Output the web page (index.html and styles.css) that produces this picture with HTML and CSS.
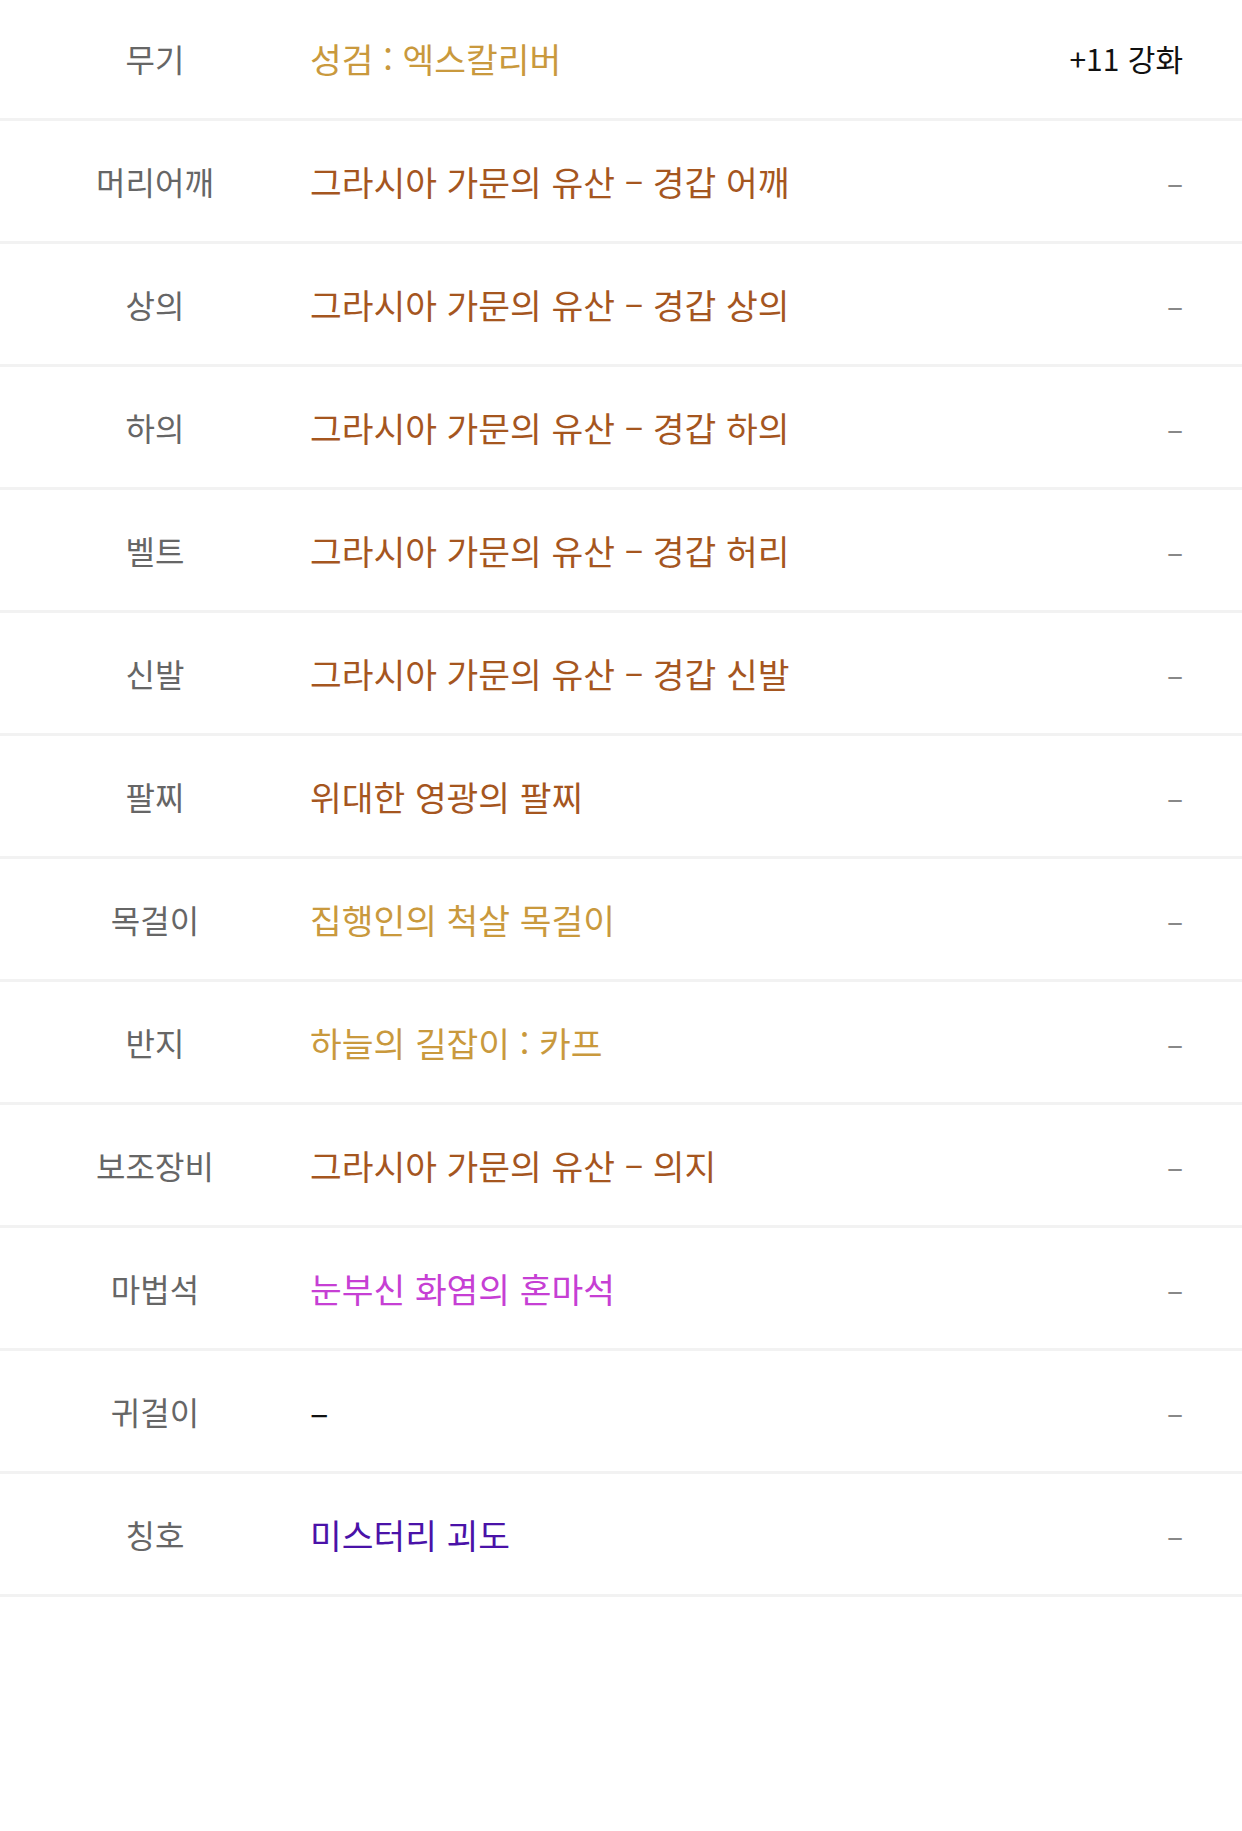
FILE: index.html
```html
<!DOCTYPE html>
<html lang="ko">
<head>
    <meta charset="UTF-8">
    <meta name="viewport" content="width=device-width, initial-scale=1.0">
    <title>장비</title>
    <link rel="stylesheet" href="styles.css">
</head>
<body>
    <div class="equip-list">
        <div class="equip-row">
            <div class="slot">무기</div>
            <div class="item gold">성검 : 엑스칼리버</div>
            <div class="extra strong">+11 강화</div>
        </div>
        <div class="equip-row">
            <div class="slot">머리어깨</div>
            <div class="item brown">그라시아 가문의 유산 – 경갑 어깨</div>
            <div class="extra">–</div>
        </div>
        <div class="equip-row">
            <div class="slot">상의</div>
            <div class="item brown">그라시아 가문의 유산 – 경갑 상의</div>
            <div class="extra">–</div>
        </div>
        <div class="equip-row">
            <div class="slot">하의</div>
            <div class="item brown">그라시아 가문의 유산 – 경갑 하의</div>
            <div class="extra">–</div>
        </div>
        <div class="equip-row">
            <div class="slot">벨트</div>
            <div class="item brown">그라시아 가문의 유산 – 경갑 허리</div>
            <div class="extra">–</div>
        </div>
        <div class="equip-row">
            <div class="slot">신발</div>
            <div class="item brown">그라시아 가문의 유산 – 경갑 신발</div>
            <div class="extra">–</div>
        </div>
        <div class="equip-row">
            <div class="slot">팔찌</div>
            <div class="item brown">위대한 영광의 팔찌</div>
            <div class="extra">–</div>
        </div>
        <div class="equip-row">
            <div class="slot">목걸이</div>
            <div class="item gold">집행인의 척살 목걸이</div>
            <div class="extra">–</div>
        </div>
        <div class="equip-row">
            <div class="slot">반지</div>
            <div class="item gold">하늘의 길잡이 : 카프</div>
            <div class="extra">–</div>
        </div>
        <div class="equip-row">
            <div class="slot">보조장비</div>
            <div class="item brown">그라시아 가문의 유산 – 의지</div>
            <div class="extra">–</div>
        </div>
        <div class="equip-row">
            <div class="slot">마법석</div>
            <div class="item magenta">눈부신 화염의 혼마석</div>
            <div class="extra">–</div>
        </div>
        <div class="equip-row">
            <div class="slot">귀걸이</div>
            <div class="item none">–</div>
            <div class="extra">–</div>
        </div>
        <div class="equip-row">
            <div class="slot">칭호</div>
            <div class="item purple">미스터리 괴도</div>
            <div class="extra">–</div>
        </div>
    </div>
</body>
</html>
```
FILE: styles.css
```css
body {
    margin: 0;
    padding: 0;
    background-color: #fff;
    font-family: "Noto Sans CJK KR", "Noto Sans", sans-serif;
    color: #333;
}

.equip-list {
    margin-top: -2px;
}

.equip-row {
    display: flex;
    align-items: center;
    height: 120px;
    border-bottom: 3px solid #f2f2f2;
}

.slot {
    width: 310px;
    flex-shrink: 0;
    text-align: center;
    font-size: 32px;
    color: #666;
}

.item {
    flex: 1;
    font-size: 34.5px;
}

.extra {
    padding-right: 59px;
    text-align: right;
    font-size: 30px;
    color: #888;
}

.extra.strong {
    color: #111;
}

/* item grade colours */
.gold {
    color: #c9993d;
}

.brown {
    color: #a5561f;
}

.magenta {
    color: #c63fd4;
}

.purple {
    color: #4a12a8;
}

.none {
    color: #111;
}
```
